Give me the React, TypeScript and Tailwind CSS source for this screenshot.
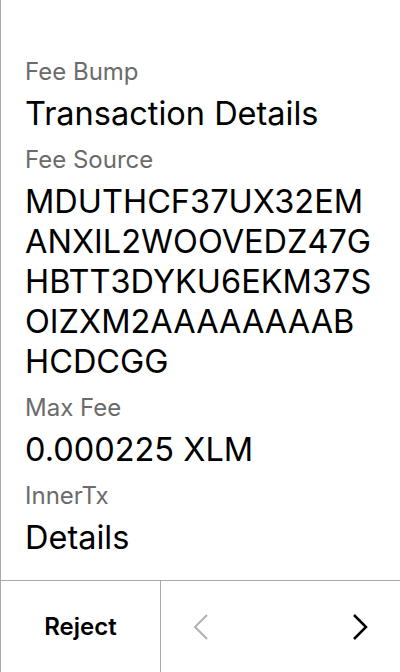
const fields = [
  { label: "Fee Bump", value: "Transaction Details" },
  { label: "Fee Source", value: "MDUTHCF37UX32EMANXIL2WOOVEDZ47GHBTT3DYKU6EKM37SOIZXM2AAAAAAAABHCDCGG" },
  { label: "Max Fee", value: "0.000225 XLM" },
  { label: "InnerTx", value: "Details" },
];

export default function App() {
  return (
    <div
      className="flex h-[672px] w-[400px] flex-col border-l border-[#a8a8a8] bg-white text-black"
      style={{ fontFamily: "Inter, 'Noto Sans', sans-serif" }}
    >
      <div className="flex flex-1 flex-col pl-6 pr-[27px] pt-[56px]">
        {fields.map((f) => (
          <div key={f.label} className="mb-[10px] flex flex-col">
            <div className="text-[24px] leading-[32px] text-[#6b6b6b]">{f.label}</div>
            <div className="mt-[6px] break-all text-[32.5px] leading-[40px]">{f.value}</div>
          </div>
        ))}
      </div>
      <div className="flex h-[92px] border-t border-[#a8a8a8]">
        <button className="flex w-[160px] items-center justify-center border-r border-[#a8a8a8] text-[24px] font-semibold">
          Reject
        </button>
        <div className="flex flex-1 items-center justify-between px-8">
          <svg width="16" height="26" viewBox="0 0 16 26" fill="none" stroke="#b0b0b0" strokeWidth="2">
            <path d="M14 1L2 13l12 12" />
          </svg>
          <svg width="16" height="26" viewBox="0 0 16 26" fill="none" stroke="#000" strokeWidth="2.5">
            <path d="M2 1l12 12L2 25" />
          </svg>
        </div>
      </div>
    </div>
  );
}
